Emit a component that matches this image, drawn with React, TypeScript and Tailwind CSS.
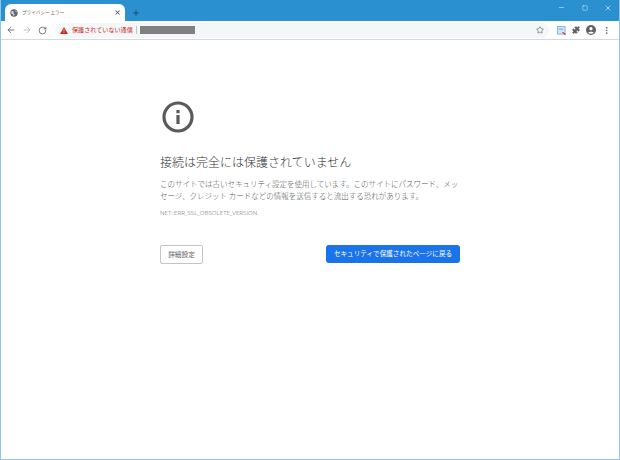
import { ArrowLeft, ArrowRight, RotateCw, X, Plus, Star, Puzzle, Minus, Square, EllipsisVertical } from "lucide-react"

const jp = "font-['Noto_Sans_CJK_JP','Noto_Sans',sans-serif]"

function TitleBar() {
  return (
    <div className="flex h-[21px] bg-[#2b90d0] pl-[4px]">
      <div className="flex h-[17px] w-[120px] self-end items-center rounded-t-[6px] bg-white pl-[5px] pr-[4px]">
        <svg width="8" height="8" viewBox="0 0 12 12" className="mr-[4px] shrink-0">
          <circle cx="6" cy="6" r="5.5" fill="#5f6368" />
          <path d="M3 2.5 6 4 5 6 7 8 6 11 4 8 1.5 6ZM8 1.5 10.5 4 8.5 5Z" fill="#d8dadc" />
        </svg>
        <span className="flex-1 text-[4.6px] leading-none text-[#5f6368]">プライバシー エラー</span>
        <X size={7} strokeWidth={3.5} className="text-[#5f6368]" />
      </div>
      <div className="flex w-[21px] items-center justify-center self-end h-[17px]">
        <Plus size={8} strokeWidth={3} className="text-[#174d80]" />
      </div>
      <div className="flex-1" />
      <div className="flex items-start pt-[3px] text-[#dceefa]">
        <div className="flex h-[9px] w-[23px] items-center justify-center"><Minus size={7} strokeWidth={2} /></div>
        <div className="flex h-[9px] w-[23px] items-center justify-center"><Square size={6} strokeWidth={2} /></div>
        <div className="flex h-[9px] w-[23px] items-center justify-center"><X size={8} strokeWidth={2} /></div>
      </div>
    </div>
  )
}

function Toolbar() {
  return (
    <div className="flex h-[19px] items-center border-b border-[#d5d8dc] bg-white">
      <div className="flex w-[54px] shrink-0 items-center pl-[5px] gap-[6px]">
        <ArrowLeft size={10} strokeWidth={2} className="text-[#5f6368]" />
        <ArrowRight size={10} strokeWidth={2} className="text-[#b4b8bd]" />
        <RotateCw size={9} strokeWidth={2.2} className="text-[#5f6368]" />
      </div>
      <div className="flex h-[15px] w-[494px] items-center rounded-full bg-[#f5f6f7] pl-[5px] pr-[5px]">
        <svg width="8" height="7" viewBox="0 0 9 8" className="shrink-0">
          <path d="M4.5 0 9 8H0Z" fill="#c5281c" />
          <rect x="4.1" y="2.7" width="0.8" height="2.7" fill="#fff" />
          <rect x="4.1" y="6" width="0.8" height="0.8" fill="#fff" />
        </svg>
        <span className="ml-[4px] text-[6.1px] leading-none text-[#c5281c]">保護されていない通信</span>
        <div className="ml-[3px] h-[8px] w-px bg-[#c0c3c7]" />
        <div className="ml-[3px] h-[8px] w-[55px] bg-[#808080]" />
        <div className="flex-1" />
        <Star size={8} strokeWidth={2} className="text-[#5f6368]" />
      </div>
      <div className="flex flex-1 items-center pl-[8px]">
        <svg width="9" height="9" viewBox="0 0 10 10" className="shrink-0">
          <rect x="0.5" y="0.5" width="8.5" height="8.5" fill="#d3e6f6" stroke="#7db4e0" strokeWidth="1" />
          <rect x="2" y="3" width="5" height="1" fill="#5f9fd6" />
          <path d="M6 7 9.5 9.5" stroke="#d9453a" strokeWidth="1.5" />
        </svg>
        <Puzzle size={8} strokeWidth={2} className="ml-[6px] fill-[#5f6368] text-[#5f6368]" />
        <svg width="10" height="10" viewBox="0 0 12 12" className="ml-[6px] shrink-0">
          <circle cx="6" cy="6" r="6" fill="#5f6368" />
          <circle cx="6" cy="4.4" r="1.9" fill="#fff" />
          <path d="M2.6 9.3C3.4 7.7 8.6 7.7 9.4 9.3 7.7 11 4.3 11 2.6 9.3Z" fill="#fff" />
        </svg>
        <EllipsisVertical size={9} strokeWidth={2.4} className="ml-[6px] text-[#5f6368]" />
      </div>
    </div>
  )
}

export default function App() {
  return (
    <div className={`flex h-[460px] w-[620px] flex-col overflow-hidden border-x border-b border-[#8fc7ea] bg-white ${jp}`}>
      <TitleBar />
      <Toolbar />
      <main className="ml-[159px] w-[300px] pt-[60px]">
        <svg width="34" height="34" viewBox="0 0 34 34" className="ml-[1px] block">
          <circle cx="17" cy="17" r="14" fill="none" stroke="#5a5a5a" strokeWidth="3.2" />
          <rect x="15.4" y="15" width="3.2" height="9" fill="#5a5a5a" />
          <rect x="15.4" y="10" width="3.2" height="3.2" fill="#5a5a5a" />
        </svg>
        <h1 className="mt-[20px] text-[12px] leading-[16px] font-light text-[#333639]">接続は完全には保護されていません</h1>
        <p className="mt-[8px] text-[7.5px] leading-[12px] font-light text-[#55585c]">このサイトでは古いセキュリティ設定を使用しています。このサイトにパスワード、メッセージ、クレジット カードなどの情報を送信すると流出する恐れがあります。</p>
        <p className="mt-[7px] font-['Open_Sans',sans-serif] text-[6.2px] leading-[8px] font-light text-[#646464]">NET::ERR_SSL_OBSOLETE_VERSION</p>
        <div className="mt-[28px] flex items-start justify-between">
          <button className="flex h-[19px] w-[43px] items-center justify-center rounded-[2px] border border-[#c4c4c4] bg-white text-[6.7px] text-[#5f6368]">詳細設定</button>
          <button className="flex h-[18px] w-[134px] items-center justify-center rounded-[3px] bg-[#1a73e8] text-[6.6px] text-white">セキュリティで保護されたページに戻る</button>
        </div>
      </main>
    </div>
  )
}
